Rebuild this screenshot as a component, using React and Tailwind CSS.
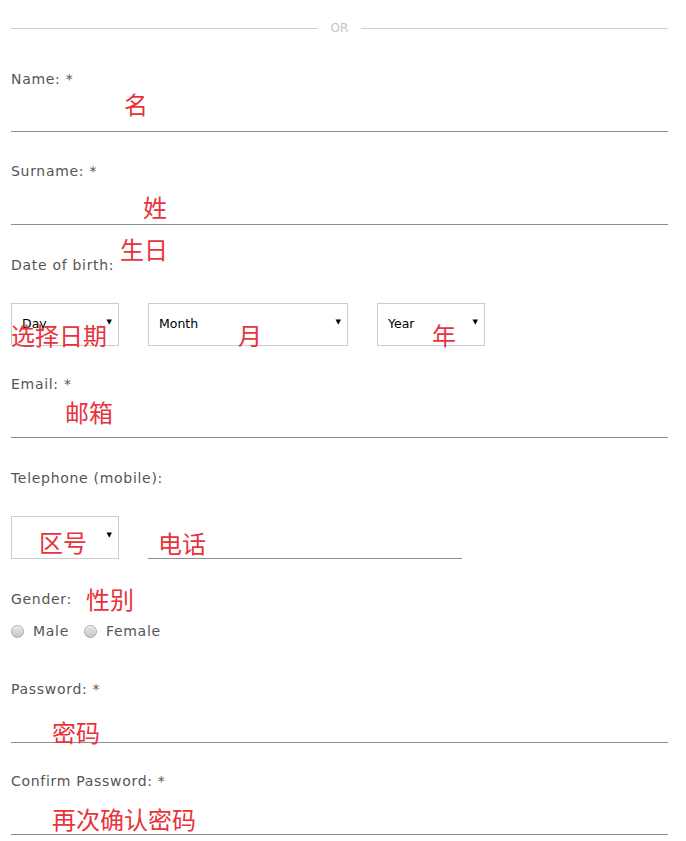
import React from "react";

const font = { fontFamily: '"DejaVu Sans", "Noto Sans CJK SC", sans-serif' };

function Note({ className, children }) {
  return (
    <span
      className={`absolute text-[24px] leading-none text-[#e8323c] whitespace-nowrap pointer-events-none ${className}`}
      style={{ fontFamily: '"Noto Sans CJK SC", sans-serif' }}
    >
      {children}
    </span>
  );
}

function Label({ children, className = "" }) {
  return (
    <div className={`h-5 leading-5 text-[14px] tracking-[0.7px] text-[#555] ${className}`}>{children}</div>
  );
}

function LineInput({ children }) {
  return <div className="relative h-[44px] border-b border-[#8c8c8c]">{children}</div>;
}

function Select({ label, className = "", children }) {
  return (
    <div className={`relative h-[43px] border border-[#cccccc] bg-white flex items-center ${className}`}>
      <span className="pl-[10px] text-[12.5px] text-black">{label}</span>
      <span className="absolute right-[6px] top-[15px] text-[7px] text-black leading-none">▼</span>
      {children}
    </div>
  );
}

function Radio({ label }) {
  return (
    <label className="flex items-center">
      <span className="w-[13px] h-[13px] rounded-full border border-[#a8a8a8] bg-gradient-to-b from-[#e6e6e6] to-[#c9c9c9] shadow-[inset_0_1px_1px_rgba(255,255,255,0.8)]"></span>
      <span className="ml-[9px] text-[14px] tracking-[0.7px] text-[#555]">{label}</span>
    </label>
  );
}

export default function App() {
  return (
    <div className="bg-white w-[686px] min-h-[841px] pl-[11px] pr-[18px] pt-[19px]" style={font}>
      <div className="flex items-center h-[18px]">
        <div className="flex-1 border-t border-[#cfcfcf]"></div>
        <span className="px-[13px] text-[12px] text-[#c4c4c4] leading-none">OR</span>
        <div className="flex-1 border-t border-[#cfcfcf]"></div>
      </div>

      <div className="mt-[32px]">
        <Label>Name: *</Label>
        <div className="relative h-[43px] border-b border-[#8c8c8c]">
          <Note className="left-[113px] top-[3px]">名</Note>
        </div>
      </div>

      <div className="mt-[29px]">
        <Label>Surname: *</Label>
        <LineInput>
          <Note className="left-[132px] top-[14px]">姓</Note>
        </LineInput>
      </div>

      <div className="mt-[30px] relative">
        <Label>Date of birth:</Label>
        <Note className="left-[109px] top-[-18px]">生日</Note>
        <div className="mt-[28px] flex items-start relative">
          <Select label="Day" className="w-[108px]" />
          <Select label="Month" className="w-[200px] ml-[29px]" />
          <Select label="Year" className="w-[108px] ml-[29px]" />
          <Note className="left-0 top-[20px]">选择日期</Note>
          <Note className="left-[227px] top-[20px]">月</Note>
          <Note className="left-[421px] top-[20px]">年</Note>
        </div>
      </div>

      <div className="mt-[28px]">
        <Label>Email: *</Label>
        <LineInput>
          <Note className="left-[54px] top-[6px]">邮箱</Note>
        </LineInput>
      </div>

      <div className="mt-[30px]">
        <Label>Telephone (mobile):</Label>
        <div className="mt-[28px] flex items-end">
          <Select label="" className="w-[108px]">
            <Note className="left-[27px] top-[13px]">区号</Note>
          </Select>
          <div className="relative ml-[29px] w-[314px] h-[43px] border-b border-[#8c8c8c]">
            <Note className="left-[10px] top-[15px]">电话</Note>
          </div>
        </div>
      </div>

      <div className="mt-[30px] relative">
        <Label>Gender:</Label>
        <Note className="left-[75px] top-[-2px]">性别</Note>
        <div className="mt-[12px] flex items-center gap-[15px] h-5">
          <Radio label="Male" />
          <Radio label="Female" />
        </div>
      </div>

      <div className="mt-[38px]">
        <Label>Password: *</Label>
        <LineInput>
          <Note className="left-[41px] top-[21px]">密码</Note>
        </LineInput>
      </div>

      <div className="mt-[28px]">
        <Label>Confirm Password: *</Label>
        <LineInput>
          <Note className="left-[41px] top-[16px]">再次确认密码</Note>
        </LineInput>
      </div>
    </div>
  );
}
